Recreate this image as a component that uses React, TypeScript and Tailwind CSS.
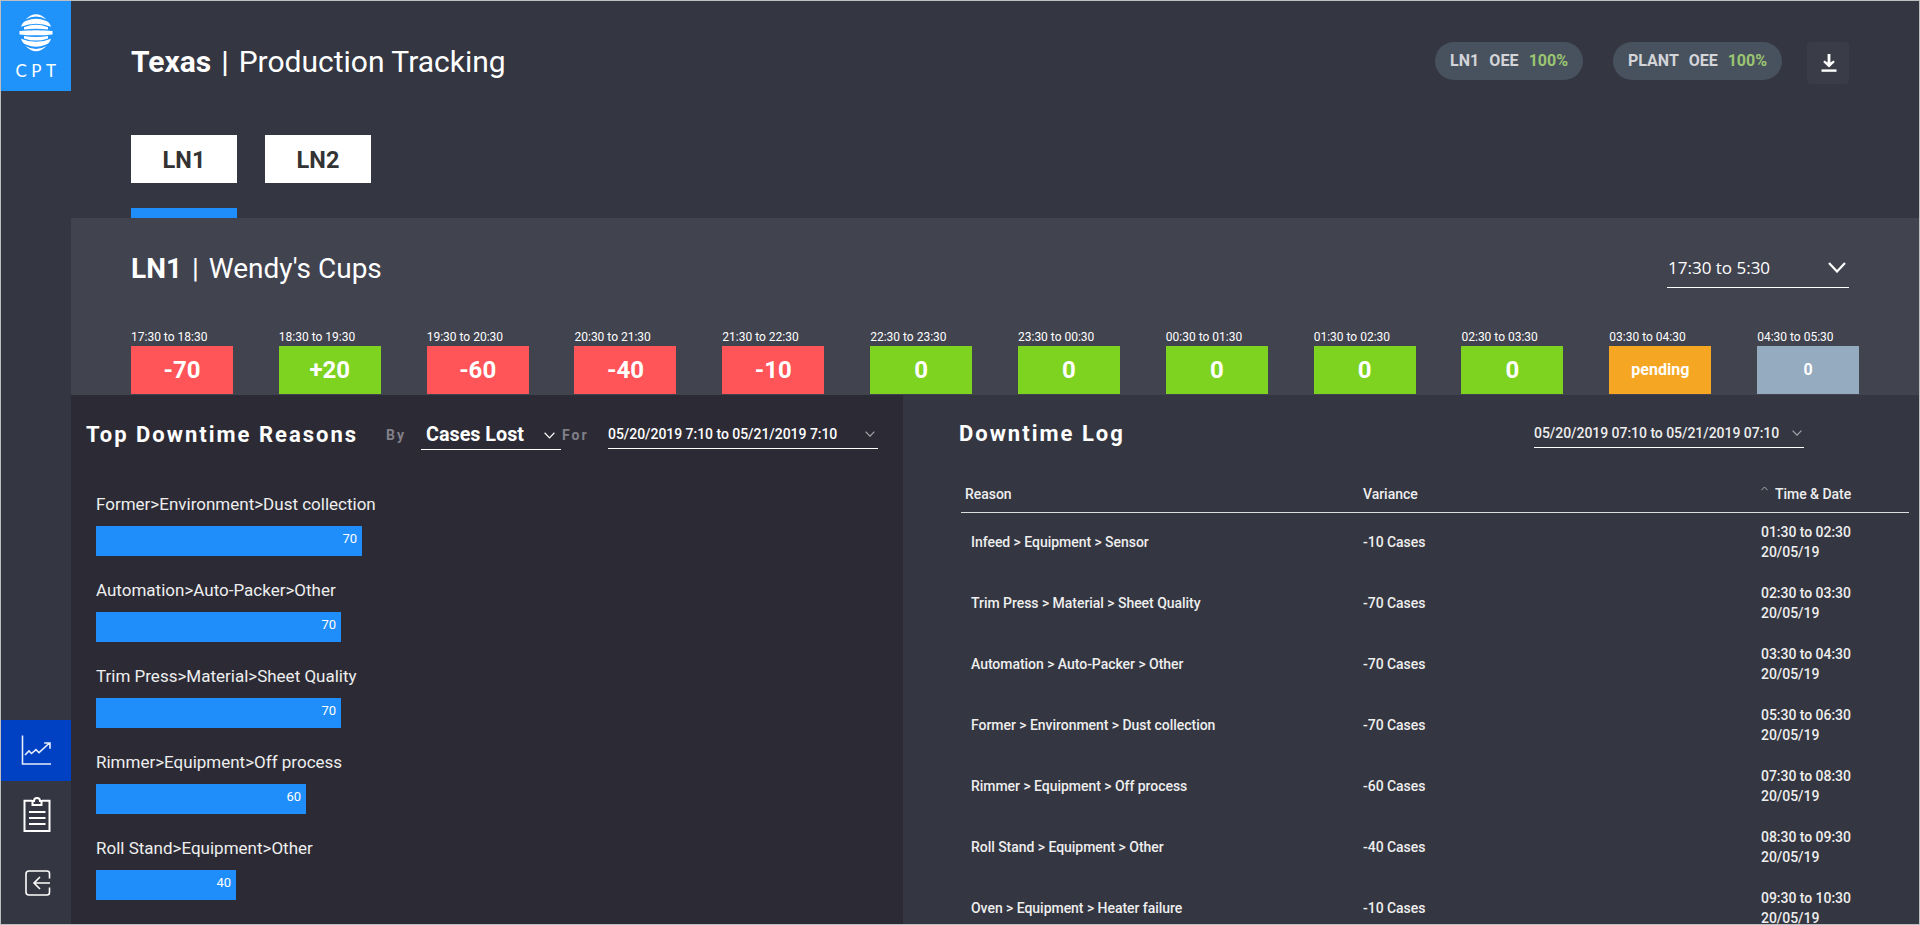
import React from "react";

const slots = [
  { time: "17:30 to 18:30", value: "-70", tone: "bg-[#ff5458] text-2xl" },
  { time: "18:30 to 19:30", value: "+20", tone: "bg-[#7ed321] text-2xl" },
  { time: "19:30 to 20:30", value: "-60", tone: "bg-[#ff5458] text-2xl" },
  { time: "20:30 to 21:30", value: "-40", tone: "bg-[#ff5458] text-2xl" },
  { time: "21:30 to 22:30", value: "-10", tone: "bg-[#ff5458] text-2xl" },
  { time: "22:30 to 23:30", value: "0", tone: "bg-[#7ed321] text-2xl" },
  { time: "23:30 to 00:30", value: "0", tone: "bg-[#7ed321] text-2xl" },
  { time: "00:30 to 01:30", value: "0", tone: "bg-[#7ed321] text-2xl" },
  { time: "01:30 to 02:30", value: "0", tone: "bg-[#7ed321] text-2xl" },
  { time: "02:30 to 03:30", value: "0", tone: "bg-[#7ed321] text-2xl" },
  { time: "03:30 to 04:30", value: "pending", tone: "bg-[#f5a623] text-base" },
  { time: "04:30 to 05:30", value: "0", tone: "bg-[#95abc0] text-base" },
];

const reasons = [
  { label: "Former>Environment>Dust collection", value: 70, width: 266 },
  { label: "Automation>Auto-Packer>Other", value: 70, width: 245 },
  { label: "Trim Press>Material>Sheet Quality", value: 70, width: 245 },
  { label: "Rimmer>Equipment>Off process", value: 60, width: 210 },
  { label: "Roll Stand>Equipment>Other", value: 40, width: 140 },
];

const log = [
  { reason: "Infeed > Equipment > Sensor", variance: "-10 Cases", time: "01:30 to 02:30" },
  { reason: "Trim Press > Material > Sheet Quality", variance: "-70 Cases", time: "02:30 to 03:30" },
  { reason: "Automation > Auto-Packer > Other", variance: "-70 Cases", time: "03:30 to 04:30" },
  { reason: "Former > Environment > Dust collection", variance: "-70 Cases", time: "05:30 to 06:30" },
  { reason: "Rimmer > Equipment > Off process", variance: "-60 Cases", time: "07:30 to 08:30" },
  { reason: "Roll Stand > Equipment > Other", variance: "-40 Cases", time: "08:30 to 09:30" },
  { reason: "Oven > Equipment > Heater failure", variance: "-10 Cases", time: "09:30 to 10:30" },
];

function Chevron({ className, stroke }: { className: string; stroke: number }) {
  return (
    <svg className={className} viewBox="0 0 18 11" fill="none" stroke="currentColor" strokeWidth={stroke}>
      <path d="M1 1l8 8.5L17 1" />
    </svg>
  );
}

function Sidebar() {
  return (
    <aside className="flex w-[70px] shrink-0 flex-col bg-[#343641]">
      <div className="flex h-[90px] w-[70px] flex-col items-center bg-[#2093fb] pt-3">
        <svg className="h-10 w-9" viewBox="0 0 36 40" fill="#fff">
          <path d="M7.500 6.500Q18-4 28.500 6.500Q18 .5 7.500 6.500Z" />
          <path d="M3 13.800Q4.500 9 8.500 7.800Q18 3.800 27.500 7.800Q31.500 9 33 13.800Q18 7.500 3 13.800Z" />
          <path d="M6 14.200Q18 9.500 30 14.200V16.600Q18 14.800 6 16.600Z" />
          <path d="M1.500 18Q18 16.300 34.500 18V21.500Q18 23.200 1.500 21.500Z" />
          <path d="M6 23Q18 24.800 30 23V25.400Q18 29.800 6 25.400Z" />
          <path d="M3 25.700Q18 32 33 25.700Q31.500 30.500 27.500 31.700Q18 35.700 8.500 31.700Q4.500 30.500 3 25.700Z" />
          <path d="M7.500 33Q18 39 28.500 33Q18 43.500 7.500 33Z" />
        </svg>
        <div className="mt-2 pl-1 font-[Lato] text-[17px] leading-5 tracking-[4.5px] text-white">CPT</div>
      </div>
      <div className="flex-1" />
      <div className="flex h-[61px] items-center justify-center bg-[#0041c4]">
        <svg className="mb-px h-8 w-8" viewBox="0 0 32 32" fill="none" stroke="#e6ecfa" strokeWidth="1.600">
          <path d="M2.500 1.500V30H31" />
          <path d="M5 21l4-4 2.500 2.500 4.500-3.800 3 3L29.500 9M24.200 9H30v5.800" />
        </svg>
      </div>
      <div className="flex h-[67px] items-center justify-center pl-px">
        <svg className="mb-[2px] h-9 w-7" viewBox="0 0 28 36" fill="none" stroke="#fff" strokeWidth="2">
          <path d="M9 4.800H1.500V35h25V4.800H19" />
          <path d="M9.500 9V5H11a3 3 0 0 1 6 0h1.500v4z" />
          <path d="M6 16h16.500M6 22h16.500M6 28h16.500" strokeWidth="1.800" />
        </svg>
      </div>
      <div className="flex h-[76px] justify-center pl-[3px] pt-[22px]">
        <svg className="h-[26px] w-[26px]" viewBox="0 0 26 26" fill="none" stroke="#fff" strokeWidth="1.600">
          <path d="M24.500 8.500V3.500a2.500 2.500 0 0 0-2.500-2.500H4a3 3 0 0 0-3 3v18a3 3 0 0 0 3 3h18a2.500 2.500 0 0 0 2.500-2.500v-5M25 13H9M15 7l-6 6 6 6" />
        </svg>
      </div>
    </aside>
  );
}

function Pill({ name, value, className }: { name: string; value: string; className: string }) {
  return (
    <div className={`flex h-[38px] items-center justify-between rounded-full bg-[#48525f] px-[15px] text-[16px] font-bold text-[#d3d5d9] ${className}`}>
      <span>{name}</span>
      <span>OEE</span>
      <span className="text-[#9bc571]">{value}</span>
    </div>
  );
}

function Header() {
  return (
    <header className="h-[217px] bg-[#343641] pl-[60px] pr-[70px]">
      <div className="flex h-[134px] items-start justify-between">
        <h1 className="pt-[43px] text-[30px] leading-9">
          <span className="font-bold">Texas</span>
          <span className="pl-[10px] pr-[10px] font-medium">|</span>
          <span>Production Tracking</span>
        </h1>
        <div className="flex items-start pt-[41px]">
          <Pill name="LN1" value="100%" className="w-[148px]" />
          <div className="w-[30px]" />
          <Pill name="PLANT" value="100%" className="w-[169px]" />
          <div className="ml-[25px] flex h-[42px] w-[42px] items-center justify-center rounded bg-[#3a3c48] pl-0.5">
            <svg className="h-5 w-4" viewBox="0 0 16 20" fill="#fff">
              <path d="M6.600 1h2.800v8.500L12.500 7.500 13.800 9 8 14.500 2.200 9l1.300-1.500 3.100 2z" />
              <path d="M.5 16.400h15v2.400H.5z" />
            </svg>
          </div>
        </div>
      </div>
      <div className="flex gap-7">
        {["LN1", "LN2"].map((tab, i) => (
          <div key={tab} className="w-[106px]">
            <div className="flex h-12 items-center justify-center bg-white text-[23.5px] font-bold leading-8 pt-px text-[#333]">{tab}</div>
            {i === 0 && <div className="mt-[25px] h-2.5 bg-[#1f8efa]" />}
          </div>
        ))}
      </div>
    </header>
  );
}

function Shift() {
  return (
    <section className="h-[177px] bg-[#41434f] pl-[60px]">
      <div className="flex h-[110px] items-start justify-between pr-[70px]">
        <h2 className="pt-[33px] text-[28px] leading-9">
          <span className="font-bold">LN1</span>
          <span className="pl-[10px] pr-[10px]">|</span>
          <span>Wendy's Cups</span>
        </h2>
        <div className="mt-[32px] flex h-[38px] w-[182px] items-center justify-between border-b border-white pb-px pl-px pr-[3px] font-['Open_Sans'] text-[17px]">
          <span>17:30 to 5:30</span>
          <Chevron className="mb-[2px] h-[11px] w-[18px]" stroke={2.2} />
        </div>
      </div>
      <div className="grid w-[1774px] grid-cols-12">
        {slots.map((s) => (
          <div key={s.time} className="w-[102px]">
            <div className="h-[18px] whitespace-nowrap text-[12px] leading-[18px]">{s.time}</div>
            <div className={`flex h-12 items-center justify-center font-bold ${s.tone}`}>{s.value}</div>
          </div>
        ))}
      </div>
    </section>
  );
}

function Reasons() {
  return (
    <section className="w-[832px] shrink-0 bg-[#2c2b35]">
      <div className="flex h-[100px] items-start whitespace-nowrap pl-[15px] pt-[26px]">
        <h3 className="w-[300px] text-[22px] font-bold leading-7 tracking-[2px]">Top Downtime Reasons</h3>
        <span className="w-[35px] text-sm font-bold leading-7 tracking-[2px] text-[#807f88]">By</span>
        <div className="flex h-[29px] w-[140px] items-center justify-between border-b border-white pl-[5px] pr-1.5 text-[19.75px] font-bold leading-7">
          <span>Cases Lost</span>
          <Chevron className="h-[7px] w-[11px]" stroke={1.8} />
        </div>
        <span className="w-[47px] pl-px text-sm font-bold leading-7 tracking-[2px] text-[#807f88]">For</span>
        <div className="flex h-7 w-[270px] items-center justify-between border-b border-white pb-0.5 pr-[3px] text-sm font-medium tracking-[-0.04px]">
          <span>05/20/2019 7:10 to 05/21/2019 7:10</span>
          <Chevron className="h-[6px] w-[10px] text-[#a5a5ad]" stroke={2.2} />
        </div>
      </div>
      <div className="pl-[25px]">
        {reasons.map((r) => (
          <div key={r.label} className="h-[86px]">
            <div className="h-[31px] text-[17px] leading-[18px] text-[#eee]">{r.label}</div>
            <div className="flex h-[30px] justify-end bg-[#1f8efa] pr-[5px] text-[13px] leading-[26px]" style={{ width: r.width }}>
              {r.value}
            </div>
          </div>
        ))}
      </div>
    </section>
  );
}

function DowntimeLog() {
  return (
    <section className="flex-1 overflow-hidden bg-[#343641] pl-[56px] pr-[10px] text-sm font-medium tracking-[-0.04px] text-[#eee]">
      <div className="flex h-[78px] items-start justify-between pr-[105px] pt-[25px]">
        <h3 className="text-[22px] font-bold leading-7 tracking-[2px] text-white">Downtime Log</h3>
        <div className="flex h-7 w-[270px] items-center justify-between border-b border-white pb-px pr-0.5">
          <span>05/20/2019 07:10 to 05/21/2019 07:10</span>
          <Chevron className="h-[6px] w-[10px] text-[#a5a5ad]" stroke={2.2} />
        </div>
      </div>
      <div className="ml-0.5 grid h-10 grid-cols-[398px_398px_1fr] items-center border-b border-[#ddd] pl-1 pt-0.5">
        <span>Reason</span>
        <span>Variance</span>
        <span className="flex items-center">
          <Chevron className="mb-[11px] mr-[7px] h-[5px] w-[7px] rotate-180 text-[#bbb]" stroke={2.2} />
          Time &amp; Date
        </span>
      </div>
      {log.map((row) => (
        <div key={row.time} className="grid h-[61px] grid-cols-[392px_398px_1fr] items-center pb-[3px] pl-3 leading-5">
          <span>{row.reason}</span>
          <span>{row.variance}</span>
          <span>
            {row.time}
            <br />
            20/05/19
          </span>
        </div>
      ))}
    </section>
  );
}

export default function App() {
  return (
    <div className="flex h-[925px] w-[1920px] overflow-hidden border border-[#bfbfbf] bg-[#343641] font-[Roboto,sans-serif] text-white">
      <Sidebar />
      <main className="flex min-w-0 flex-1 flex-col">
        <Header />
        <Shift />
        <div className="flex min-h-0 flex-1">
          <Reasons />
          <DowntimeLog />
        </div>
      </main>
    </div>
  );
}
